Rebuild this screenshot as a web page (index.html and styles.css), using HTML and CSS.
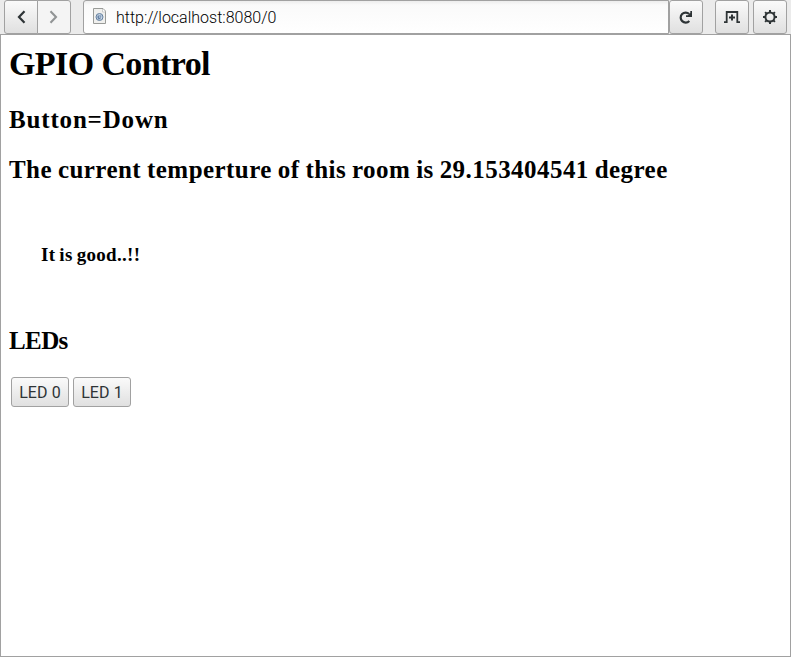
FILE: index.html
```html
<!DOCTYPE html>
<html lang="en">
<head>
<meta charset="utf-8">
<title>GPIO Control</title>
<link rel="stylesheet" href="styles.css">
</head>
<body>
<div class="window">
  <header class="toolbar">
    <div class="nav">
      <button class="tool" aria-label="Back"><svg width="16" height="16" viewBox="0 0 16 16"><path d="M11.500 2.300 6 8l5.500 5.700" fill="none" stroke="#2e3436" stroke-width="2.200"/></svg></button>
      <button class="tool forward" aria-label="Forward"><svg width="16" height="16" viewBox="0 0 16 16"><path d="m4.500 2.300 5.500 5.700-5.500 5.700" fill="none" stroke="#919495" stroke-width="2.100"/></svg></button>
    </div>
    <div class="address">
      <svg class="page-icon" width="14" height="16" viewBox="0 0 14 16"><path d="M.5.5H10L12.500 3v12.500H.5z" fill="#f0f0ee" stroke="#999b98"/><path d="M9.500 1v3H12.500" fill="#fff" stroke="#bbb" stroke-width=".7"/><circle cx="6.500" cy="9" r="3.500" fill="#c6d5e5" stroke="#65809f"/><path d="M4.500 7.500h4l-1 3-1.500 1.300-1.500-1.800z" fill="#6684a8"/><path d="M6 8.500h1.500v1H6z" fill="#e2ecf5"/></svg>
      <span class="url">http://localhost:8080/0</span>
    </div>
    <button class="tool" aria-label="Reload"><svg width="16" height="16" viewBox="0 0 16 16"><path d="M11.200 5A5 5 0 1 0 11.300 12" fill="none" stroke="#2e3436" stroke-width="2.200"/><path d="M14 2v6H8V6.200h2L12.300 4V2z" fill="#2e3436"/></svg></button>
    <button class="tool new-tab" aria-label="New tab"><svg width="16" height="16" viewBox="0 0 16 16"><path d="M0 13.200h2.700V3h10.600v10.200H16" fill="none" stroke="#2e3436" stroke-width="1.800"/><path d="M8 5.500v6M5 8.500h6" stroke="#2e3436" stroke-width="2"/></svg></button>
    <button class="tool settings" aria-label="Settings"><svg width="16" height="16" viewBox="0 0 16 16" fill="none" stroke="#2e3436"><circle cx="8" cy="8" r="4.600" stroke-width="2"/><path d="M8 1v2.500M8 12.500V15M1 8h2.500M12.500 8H15M3.100 3.100l2 2M10.900 10.900l2 2M3.100 12.900l2-2M10.900 5.100l2-2" stroke-width="2"/></svg></button>
  </header>
  <main class="page">
    <h1>GPIO Control</h1>
    <h2 class="state">Button=Down</h2>
    <h2 class="temperature">The current temperture of this room is 29.153404541 degree</h2>
    <h3>It is good..!!</h3>
    <h2 class="leds">LEDs</h2>
    <div class="controls"><button class="led">LED 0</button><button class="led">LED 1</button></div>
  </main>
</div>
</body>
</html>
```
FILE: styles.css
```css
* { box-sizing: border-box; }
body { margin: 0; background: #fff; color: #000; }
.window { height: 657px; display: flex; flex-direction: column; }
.toolbar { height: 34px; padding-left: 4px; display: flex; background: #ebebeb; }
button { margin: 0; font-family: Roboto, sans-serif; }
.nav { display: flex; width: 67px; margin-right: 12px; }
.tool {
  width: 34px; height: 34px; padding: 0; flex: none;
  display: flex; align-items: center; justify-content: center;
  border: 1px solid #a1a1a1; border-radius: 3px;
  background: linear-gradient(#fafafa, #e0e0e0);
}
.nav .tool { border-radius: 3px 0 0 3px; }
.nav .forward { margin-left: -1px; border-radius: 0 3px 3px 0; background: #f4f4f4; }
.address {
  width: 586px; height: 34px; padding-left: 9px; display: flex; align-items: center;
  border: 1px solid #a1a1a1; border-radius: 3px 0 0 3px;
  background: linear-gradient(#ededed, #fafafa 4px, #fff);
}
.page-icon { margin-bottom: 2px; }
.url { margin: 2px 0 0 9px; font: 300 16px/20px Roboto, sans-serif; white-space: nowrap; }
.new-tab { margin-left: 12px; }
.settings { margin-left: 4px; }
.page { flex: 1; padding: 0 8px; border: 1px solid #a1a1a1; }
h1, h2, h3 { margin: 0; font-family: "Liberation Serif", serif; font-weight: 700; white-space: nowrap; }
h1 { margin-top: 9px; font-size: 34px; line-height: 40px; letter-spacing: -.6px; }
h2 { font-size: 25px; line-height: 30px; }
.state { margin-top: 21px; letter-spacing: .83px; }
.temperature { margin-top: 20px; letter-spacing: .45px; word-spacing: -.8px; }
h3 { margin: 57px 0 0 32px; font-size: 19px; line-height: 26px; letter-spacing: .3px; word-spacing: -1px; }
.leds { margin-top: 58px; letter-spacing: -.6px; }
.controls { margin: 21px 0 0 2px; display: flex; gap: 4px; }
.led {
  width: 58px; height: 30px; padding: 0; color: #2e3436; font-size: 16px; letter-spacing: .1px;
  border: 1px solid #a1a1a1; border-radius: 3px;
  background: linear-gradient(#fafafa, #e0e0e0);
}
```
